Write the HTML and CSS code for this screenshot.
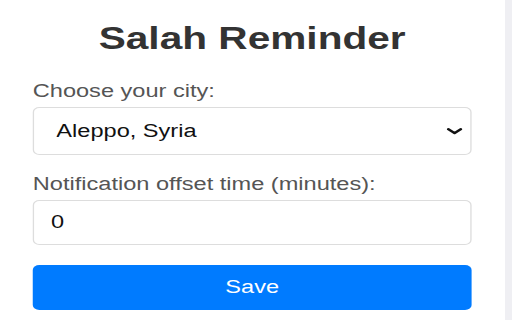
FILE: index.html
```html
<!DOCTYPE html>
<html lang="en">
<head>
    <meta charset="UTF-8">
    <meta name="viewport" content="width=device-width, initial-scale=1.0">
    <title>Salah Reminder</title>
    <link rel="stylesheet" href="styles.css">
</head>
<body>

    <div class="viewport">
        <div class="popup">
            <h1>Salah Reminder</h1>

            <label for="city">Choose your city:</label>
            <div class="select-wrap">
                <select id="city">
                    <option value="aleppo">Aleppo, Syria</option>
                    <option value="damascus">Damascus, Syria</option>
                    <option value="homs">Homs, Syria</option>
                </select>
                <svg class="chevron" width="12" height="7" viewBox="0 0 12 7">
                    <polyline points="1.2,1.2 6,5.2 10.8,1.2" fill="none" stroke="#111" stroke-width="2.2" stroke-linecap="round" stroke-linejoin="round"/>
                </svg>
            </div>

            <label for="offset">Notification offset time (minutes):</label>
            <input type="number" id="offset" value="0">

            <button id="save">Save</button>
        </div>
    </div>

    <div class="scrollbar"></div>

</body>
</html>
```

FILE: styles.css
```css
body {
    font-family: "Liberation Sans", Arial, sans-serif;
    margin: 0;
    padding: 0;
    background: #fff;
    display: flex;
    height: 320px;
    overflow: hidden;
}

.viewport {
    flex: 1;
    overflow: hidden;
}

/* the popup was captured stretched sideways */
.popup {
    width: 386px;
    box-sizing: border-box;
    padding: 21px 26px 0 25px;
    transform: scaleX(1.31);
    transform-origin: 0 0;
}

h1 {
    font-size: 31px;
    line-height: 36px;
    font-weight: bold;
    color: #333;
    text-align: center;
    margin: 0 0 24px;
}

label {
    display: block;
    font-size: 18px;
    line-height: 20px;
    color: #555;
    margin-bottom: 6px;
}

.select-wrap {
    position: relative;
    margin-bottom: 19px;
}

select,
input {
    display: block;
    width: 100%;
    box-sizing: border-box;
    font-family: inherit;
    font-size: 18px;
    color: #111;
    background: #fff;
    border: 1px solid #ddd;
    border-radius: 5px;
    outline: none;
}

select {
    height: 48px;
    padding: 0 30px 0 17px;
    appearance: none;
    -webkit-appearance: none;
}

.chevron {
    position: absolute;
    right: 7px;
    top: 21px;
    pointer-events: none;
}

input {
    height: 45px;
    padding: 0 13px;
    -moz-appearance: textfield;
}

input::-webkit-inner-spin-button,
input::-webkit-outer-spin-button {
    -webkit-appearance: none;
    margin: 0;
}

button {
    display: block;
    width: 100%;
    height: 45px;
    margin-top: 20px;
    border: none;
    border-radius: 5px;
    background-color: #007bff;
    color: #fff;
    font-family: inherit;
    font-size: 18px;
    cursor: pointer;
}

button:hover {
    background-color: #0069d9;
}

.scrollbar {
    width: 7px;
    flex: none;
    background: #efeff3;
}
```
